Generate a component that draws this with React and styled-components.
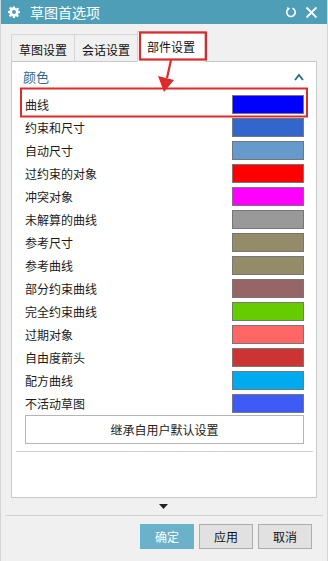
import styled, { createGlobalStyle } from "styled-components";

const GlobalStyle = createGlobalStyle`
  html, body { margin: 0; padding: 0; background: #f0f0f0; }
  body { font-family: "Noto Sans CJK SC", "Noto Sans", sans-serif; }
`;

const colors = [
  ["曲线", "#0000ff"],
  ["约束和尺寸", "#3366cc"],
  ["自动尺寸", "#6699cc"],
  ["过约束的对象", "#ff0000"],
  ["冲突对象", "#ff00ff"],
  ["未解算的曲线", "#999999"],
  ["参考尺寸", "#948b68"],
  ["参考曲线", "#948b68"],
  ["部分约束曲线", "#966666"],
  ["完全约束曲线", "#66cc00"],
  ["过期对象", "#ff6666"],
  ["自由度箭头", "#cc3333"],
  ["配方曲线", "#00aaee"],
  ["不活动草图", "#3e5cf5"],
];

function App() {
  return (
    <>
      <GlobalStyle />
      <Window>
        <TitleBar>
          <TitleLeft>
            <svg width="12" height="12" viewBox="0 0 24 24">
              <path
                fill="#fff"
                d="M10 1h4l.6 3.2a8 8 0 0 1 2.2.9l2.7-1.9 2.8 2.8-1.9 2.7a8 8 0 0 1 .9 2.2L24 10v4l-3.2.6a8 8 0 0 1-.9 2.2l1.9 2.7-2.8 2.8-2.7-1.9a8 8 0 0 1-2.2.9L14 24h-4l-.6-3.2a8 8 0 0 1-2.2-.9l-2.7 1.9-2.8-2.8 1.9-2.7a8 8 0 0 1-.9-2.2L0 14v-4l3.2-.6a8 8 0 0 1 .9-2.2L2.2 4.5 5 1.7l2.7 1.9a8 8 0 0 1 2.2-.9Z M12 8a4 4 0 1 0 0 8 4 4 0 0 0 0-8Z"
                fillRule="evenodd"
              />
            </svg>
            <Title>草图首选项</Title>
          </TitleLeft>
          <TitleIcons>
            <svg width="12" height="12" viewBox="0 0 24 24" fill="none" stroke="#fff" strokeWidth="3.2">
              <path d="M15 4.5A8.5 8.5 0 1 1 7 5.5" />
              <path d="M4 2l6 2.5-4 5z" fill="#fff" stroke="none" />
            </svg>
            <svg width="13" height="13" viewBox="0 0 24 24" stroke="#fff" strokeWidth="3.4" strokeLinecap="square">
              <path d="M4 4l16 16M20 4L4 20" />
            </svg>
          </TitleIcons>
        </TitleBar>

        <Body>
          <TabRow>
            <Tab>草图设置</Tab>
            <Tab>会话设置</Tab>
            <Tab $active>部件设置</Tab>
          </TabRow>

          <Panel>
            <SectionHead>
              <SectionTitle>颜色</SectionTitle>
              <svg width="10" height="8" viewBox="0 0 10 8" fill="none" stroke="#2b6f88" strokeWidth="2">
                <path d="M1 7l4-5 4 5" />
              </svg>
            </SectionHead>
            <List>
              {colors.map(([label, c]) => (
                <Row key={label}>
                  <RowLabel>{label}</RowLabel>
                  <Swatch $color={c} />
                </Row>
              ))}
            </List>
            <InheritButton>继承自用户默认设置</InheritButton>
            <PanelRule />
          </Panel>

          <Expander>
            <svg width="9" height="5" viewBox="0 0 9 5">
              <path d="M0 0h9L4.5 5z" fill="#222" />
            </svg>
          </Expander>
          <FooterRule />
          <Footer>
            <DlgButton $primary>确定</DlgButton>
            <DlgButton>应用</DlgButton>
            <DlgButton>取消</DlgButton>
          </Footer>
        </Body>

        <Annotation width="328" height="561" viewBox="0 0 328 561">
          <rect x="140" y="32.5" width="66" height="27" fill="none" stroke="#dd2a2a" strokeWidth="2.2" />
          <rect x="21" y="88.5" width="286" height="28" fill="none" stroke="#dd2a2a" strokeWidth="2" />
          <path d="M171 60 L167 78" stroke="#dd2a2a" strokeWidth="2.2" />
          <path d="M158 76 L174 80 L164 92 Z" fill="#dd2a2a" />
        </Annotation>
      </Window>
    </>
  );
}

export default App;

const Window = styled.div`
  position: relative;
  width: 328px;
  height: 561px;
  box-sizing: border-box;
  background: #f0f0f0;
  border-left: 1px solid #d4d4d4;
  border-right: 1px solid #d4d4d4;
  display: flex;
  flex-direction: column;
  overflow: hidden;
`;

const TitleBar = styled.div`
  height: 24px;
  background: #4f9eb8;
  display: flex;
  align-items: center;
  justify-content: space-between;
  padding: 0 9px 0 7px;
  flex-shrink: 0;
`;

const TitleLeft = styled.div`
  display: flex;
  align-items: center;
  gap: 10px;
`;

const Title = styled.span`
  color: #fff;
  font-size: 14px;
  line-height: 24px;
`;

const TitleIcons = styled.div`
  display: flex;
  align-items: center;
  gap: 8px;
`;

const Body = styled.div`
  display: flex;
  flex-direction: column;
  flex: 1;
`;

const TabRow = styled.div`
  display: flex;
  align-items: flex-end;
  height: 37px;
  padding-left: 10px;
  box-sizing: border-box;
`;

const Tab = styled.div`
  height: ${(p) => (p.$active ? "31px" : "28px")};
  padding: 0 ${(p) => (p.$active ? "9px" : "7px")};
  padding-top: ${(p) => (p.$active ? "0" : "2px")};
  box-sizing: border-box;
  display: flex;
  align-items: center;
  font-size: 12px;
  color: #111;
  background: ${(p) => (p.$active ? "#fff" : "#f0f0f0")};
  border: 1px solid #d6d6d6;
  border-bottom: ${(p) => (p.$active ? "1px solid #fff" : "1px solid #c9c9c9")};
  margin-right: -1px;
  margin-bottom: -1px;
  position: relative;
  z-index: ${(p) => (p.$active ? 1 : 0)};
`;

const Panel = styled.div`
  margin: 0 10px;
  height: 437px;
  box-sizing: border-box;
  background: #fff;
  border: 1px solid #c9c9c9;
  display: flex;
  flex-direction: column;
`;

const SectionHead = styled.div`
  height: 31px;
  display: flex;
  align-items: center;
  justify-content: space-between;
  padding: 0 12px 2px 11px;
  box-sizing: border-box;
  flex-shrink: 0;
`;

const SectionTitle = styled.span`
  font-size: 13px;
  color: #2f6c87;
`;

const List = styled.div`
  display: flex;
  flex-direction: column;
`;

const Row = styled.div`
  height: 23px;
  display: flex;
  align-items: center;
  justify-content: space-between;
  padding: 0 12px 0 13px;
`;

const RowLabel = styled.span`
  font-size: 12px;
  color: #1a1a1a;
`;

const Swatch = styled.div`
  width: 72px;
  height: 19px;
  box-sizing: border-box;
  background: ${(p) => p.$color};
  border: 1px solid #777;
`;

const InheritButton = styled.div`
  margin: 0 12px 0 13px;
  height: 29px;
  box-sizing: border-box;
  border: 1px solid #b4b4b4;
  background: #fff;
  display: flex;
  align-items: center;
  justify-content: center;
  font-size: 12px;
  color: #222;
`;

const PanelRule = styled.div`
  margin: 7px 3px 0 4px;
  height: 1px;
  background: #cfcfcf;
`;

const Expander = styled.div`
  height: 17px;
  display: flex;
  align-items: center;
  justify-content: center;
  padding-right: 2px;
`;

const FooterRule = styled.div`
  margin: 0 4px 0 5px;
  height: 1px;
  background: #cfcfcf;
`;

const Footer = styled.div`
  display: flex;
  justify-content: flex-end;
  gap: 5px;
  padding: 8px 15px 0 0;
`;

const DlgButton = styled.div`
  width: 54px;
  height: 25px;
  box-sizing: border-box;
  display: flex;
  align-items: center;
  justify-content: center;
  font-size: 12px;
  color: ${(p) => (p.$primary ? "#fff" : "#111")};
  background: ${(p) => (p.$primary ? "#6bb1c9" : "#e1e1e1")};
  border: 1px solid ${(p) => (p.$primary ? "#6bb1c9" : "#adadad")};
`;

const Annotation = styled.svg`
  position: absolute;
  left: -1px;
  top: 0;
  z-index: 5;
  pointer-events: none;
`;
